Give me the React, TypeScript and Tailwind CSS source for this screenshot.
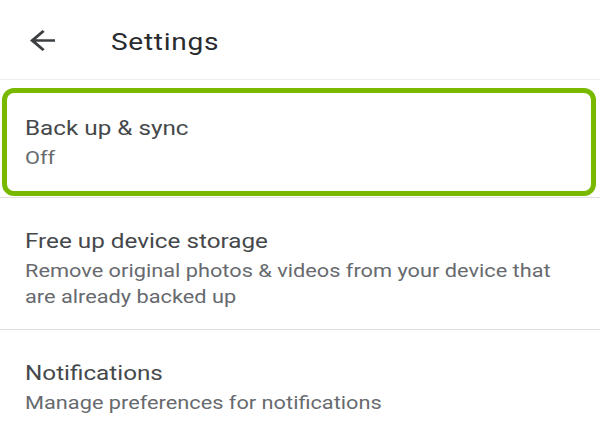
import React from "react";

const font = { fontFamily: "Roboto, 'Noto Sans', Arial, sans-serif" };

function Title({ children }: { children: React.ReactNode }) {
  return (
    <div className="h-[30px] leading-[30px] text-[21px] text-[#45484b] whitespace-nowrap">
      <span className="inline-block origin-left scale-x-[1.155]">{children}</span>
    </div>
  );
}

function Sub({ children }: { children: React.ReactNode }) {
  return (
    <div className="mt-[2px] text-[19px] leading-[26px] text-[#676a6e]">
      <span className="block w-[476px] origin-left scale-x-[1.145]">{children}</span>
    </div>
  );
}

export default function App() {
  return (
    <div className="w-[600px] h-[442px] overflow-hidden bg-white" style={font}>
      <header className="h-[79px] flex items-center">
        <svg
          className="ml-[30px] mt-[2px] shrink-0"
          width="25"
          height="21"
          viewBox="4 4 16 16"
          preserveAspectRatio="none"
        >
          <path
            d="M20 11H7.83l5.59-5.59L12 4l-8 8 8 8 1.41-1.41L7.83 13H20v-2z"
            fill="#3c4043"
          />
        </svg>
        <div className="ml-[56px] text-[24px] leading-[30px] text-[#2a2b2e] tracking-[0.6px] whitespace-nowrap mt-[4px]">
          <span className="inline-block origin-left scale-x-[1.17]">Settings</span>
        </div>
      </header>
      <div className="h-px bg-[#ededed]" />
      <div className="pt-[8px] pb-px">
        <div className="ml-[2px] mr-[4px] border-[5px] border-[#78b900] rounded-[12px] pl-[18px] pt-[20px] pb-[20px]">
          <Title>Back up &amp; sync</Title>
          <Sub>Off</Sub>
        </div>
      </div>
      <div className="h-px bg-[#e0e0e0]" />
      <div className="pl-[25px] pt-[28px] pb-[19px]">
        <Title>Free up device storage</Title>
        <Sub>Remove original photos &amp; videos from your device that are already backed up</Sub>
      </div>
      <div className="h-px bg-[#e0e0e0]" />
      <div className="pl-[25px] pt-[28px] pb-[19px]">
        <Title>Notifications</Title>
        <Sub>Manage preferences for notifications</Sub>
      </div>
    </div>
  );
}
